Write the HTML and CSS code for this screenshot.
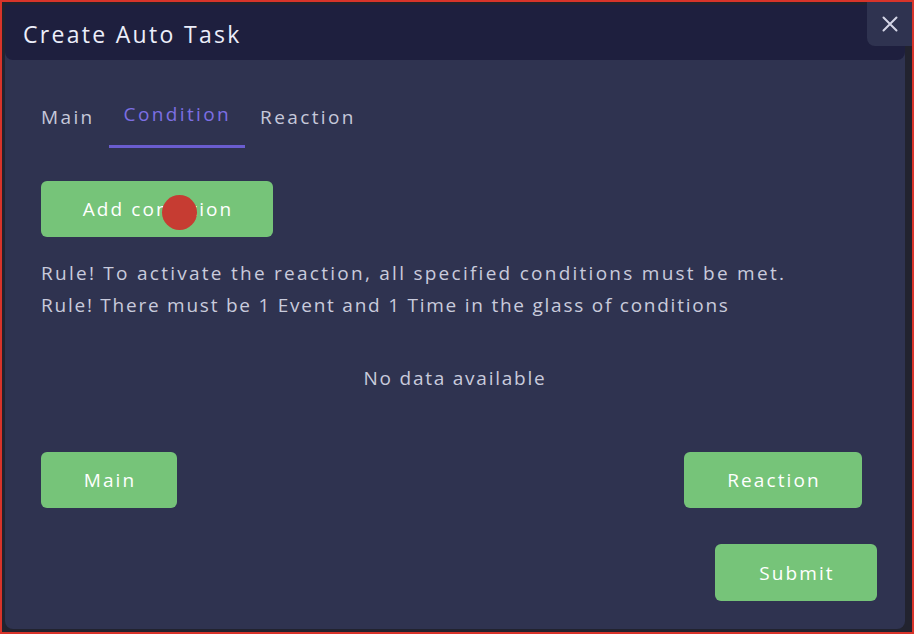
FILE: index.html
```html
<!DOCTYPE html>
<html>
<head>
<meta charset="utf-8">
<link rel="stylesheet" href="styles.css">
</head>
<body>
<div class="frame">
  <div class="dialog">
    <div class="header"><h1 class="title">Create Auto Task</h1></div>
    <div class="content">
      <div class="tabs">
        <div class="tab">Main</div>
        <div class="tab active">Condition</div>
        <div class="tab">Reaction</div>
      </div>
      <div class="add-row">
        <button class="btn btn-add">Add condition</button>
        <span class="cursor-dot"></span>
      </div>
      <div class="rules">
        <p class="rule-wide">Rule! To activate the reaction, all specified conditions must be met.</p>
        <p>Rule! There must be 1 Event and 1 Time in the glass of conditions</p>
      </div>
      <div class="empty">No data available</div>
      <div class="nav-row">
        <button class="btn btn-main">Main</button>
        <button class="btn btn-reaction">Reaction</button>
      </div>
      <div class="submit-row">
        <button class="btn btn-submit">Submit</button>
      </div>
    </div>
  </div>
  <button class="close" aria-label="Close">
    <svg width="16" height="16" viewBox="0 0 16 16"><path d="M1.5 1.5 L14.5 14.5 M14.5 1.5 L1.5 14.5" stroke="#d4d5e6" stroke-width="2" stroke-linecap="round"/></svg>
  </button>
</div>
</body>
</html>
```
FILE: styles.css
```css
* { box-sizing: border-box; }
html, body { margin: 0; padding: 0; }
body {
  width: 914px;
  height: 634px;
  background: #22232f;
  font-family: "Open Sans", "Liberation Sans", sans-serif;
  letter-spacing: 0.11em;
  overflow: hidden;
}
.frame {
  position: relative;
  width: 914px;
  height: 634px;
  border: 2px solid #d8342a;
  padding: 3px 7px 3px 3px;
}
.dialog {
  width: 900px;
  height: 624px;
  background: #2f3350;
  border-radius: 8px;
  display: flex;
  flex-direction: column;
}
.header {
  height: 55px;
  background: #1e1f3e;
  border-radius: 0 0 8px 8px;
  display: flex;
  align-items: center;
  padding-left: 18px;
  padding-top: 2px;
  flex-shrink: 0;
}
.title {
  margin: 0;
  font-size: 23px;
  font-weight: 500;
  color: #eceefa;
  letter-spacing: 0.1em;
}
.content {
  padding: 38px 28px 0 36px;
  display: flex;
  flex-direction: column;
  color: #c9cbdc;
}
.tabs {
  display: flex;
  height: 50px;
}
.tab {
  padding: 0 14px 0 15px;
  font-size: 19px;
  letter-spacing: 0.125em;
  color: #c6c8da;
  line-height: 26px;
  padding-top: 6px;
  border-bottom: 3px solid transparent;
}
.tab:first-child { padding-left: 0; }
.tab.active {
  color: #7d6fe3;
  padding-top: 3px;
  border-bottom-color: #6a5dcf;
}
.add-row {
  position: relative;
  margin-top: 33px;
  display: flex;
}
.btn {
  border: none;
  background: #76c479;
  color: #ffffff;
  font-family: inherit;
  font-size: 19px;
  letter-spacing: 0.11em;
  border-radius: 6px;
  height: 56px;
  padding: 0 0 0 2px;
}
.btn-add { width: 232px; }
.cursor-dot {
  position: absolute;
  left: 121px;
  top: 14px;
  width: 35px;
  height: 35px;
  border-radius: 50%;
  background: #c63c32;
}
.rules {
  margin-top: 20px;
  font-size: 19px;
  line-height: 32px;
  color: #c9cbdc;
}
.rules p { margin: 0; }
.rules .rule-wide { letter-spacing: 0.119em; }
.empty {
  margin-top: 44px;
  text-align: center;
  font-size: 19px;
  color: #c9cbdc;
  padding-right: 8px;
  height: 25px;
}
.nav-row {
  margin-top: 62px;
  display: flex;
  justify-content: space-between;
  padding-right: 15px;
}
.btn-main { width: 136px; height: 56px; }
.btn-reaction { width: 178px; height: 56px; }
.submit-row {
  margin-top: 36px;
  display: flex;
  justify-content: flex-end;
}
.btn-submit { width: 162px; height: 57px; }
.close {
  position: absolute;
  top: 0;
  right: 0;
  width: 45px;
  height: 44px;
  border: none;
  padding: 0;
  background: #2f3350;
  border-radius: 0 0 0 8px;
  display: flex;
  align-items: center;
  justify-content: center;
}
```
